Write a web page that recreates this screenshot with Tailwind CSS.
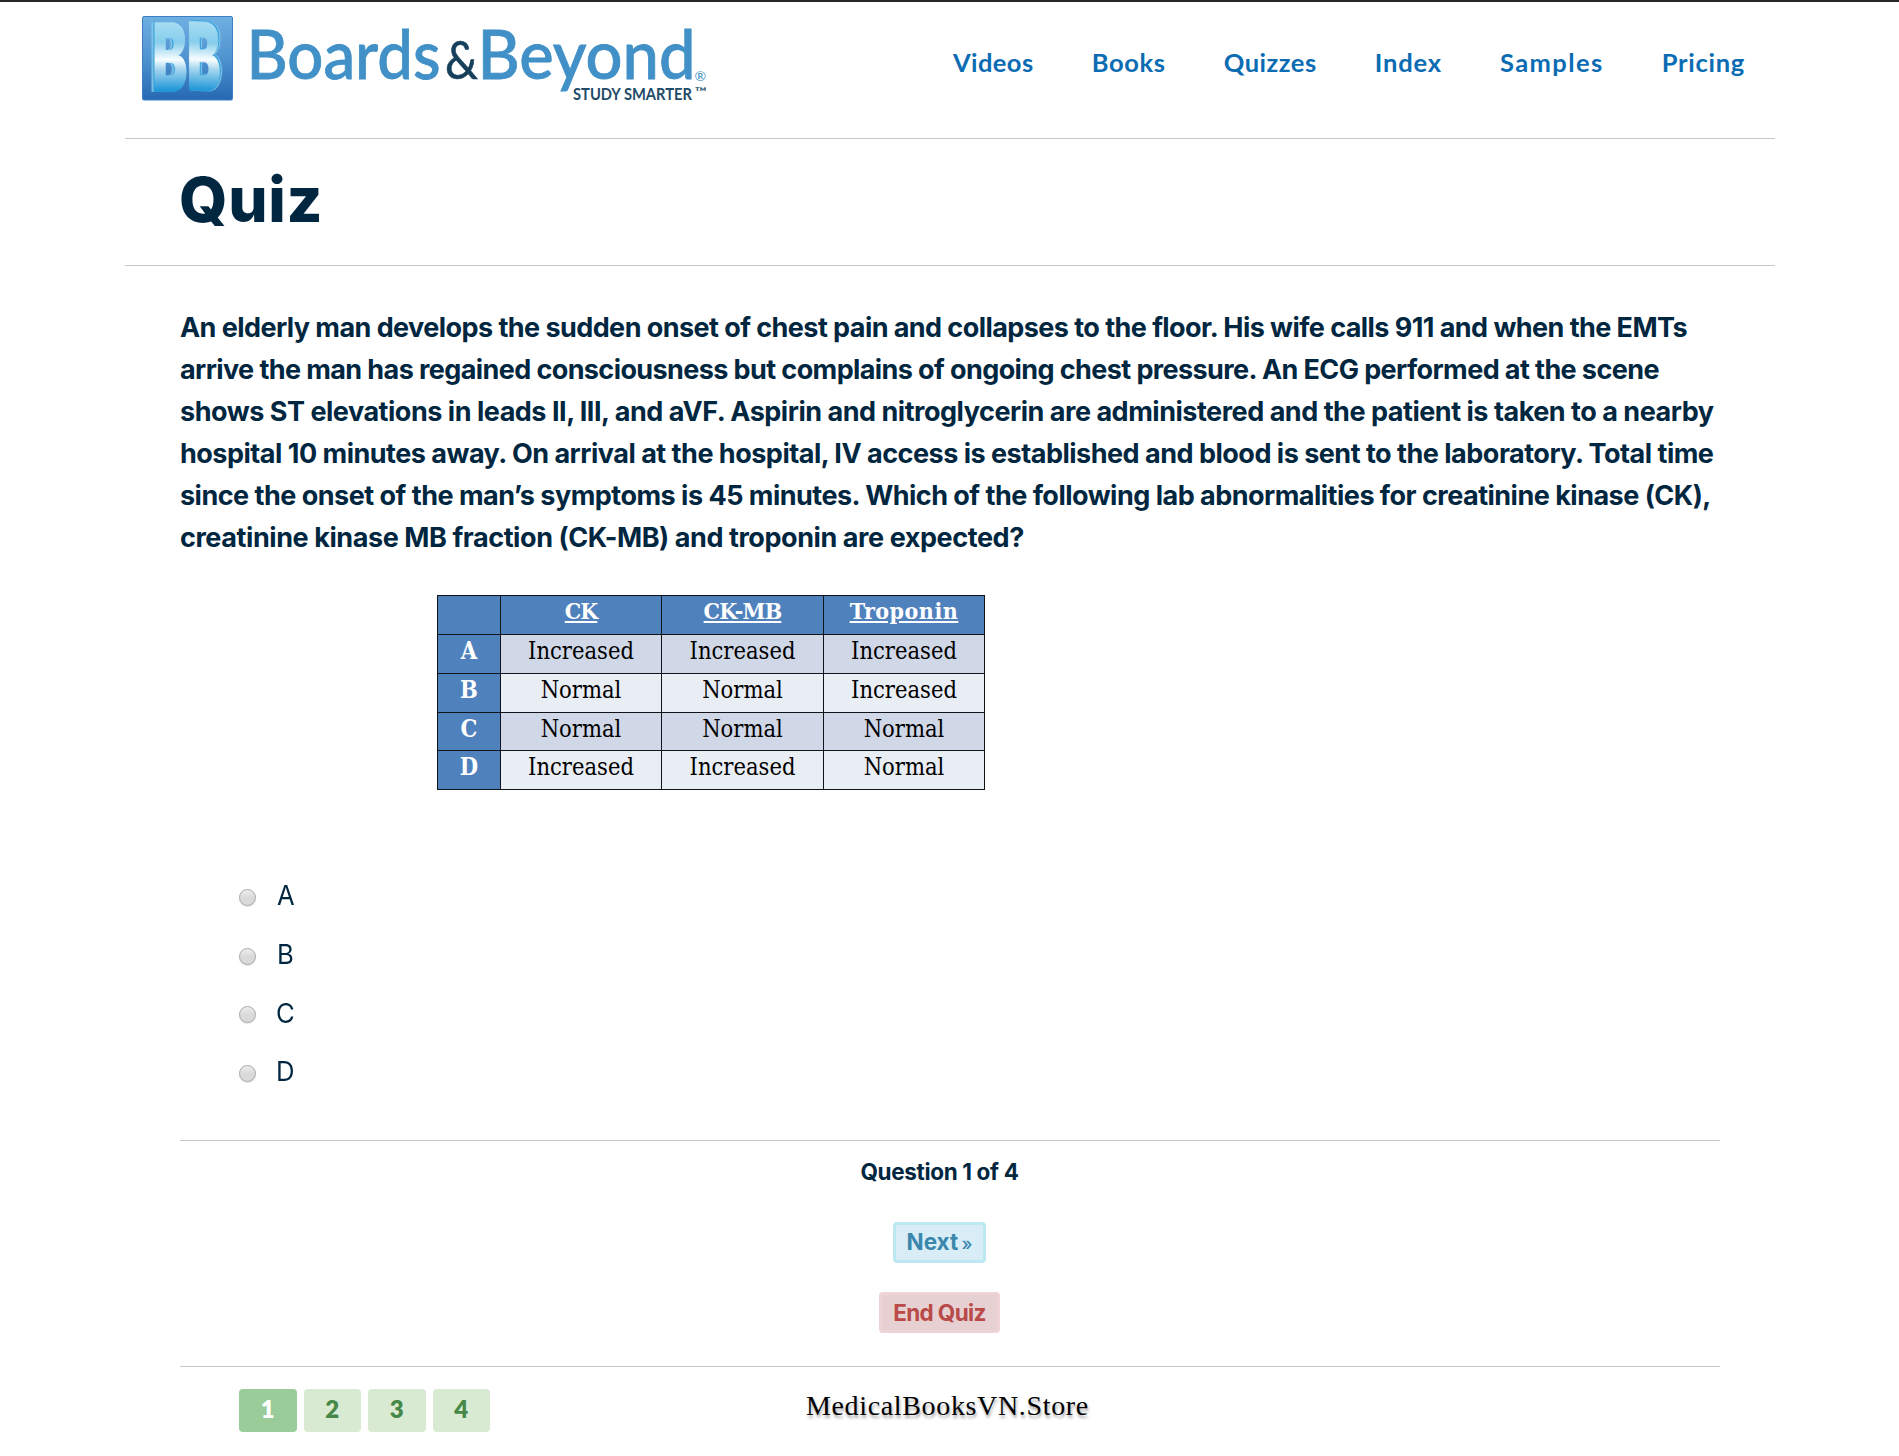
<!DOCTYPE html>
<html lang="en">
<head>
<meta charset="utf-8">
<title>Quiz - Boards &amp; Beyond</title>
<script src="https://cdn.jsdelivr.net/npm/@tailwindcss/browser@4"></script>
</head>
<body class="h-[1456px] overflow-hidden bg-white font-[Inter,sans-serif] text-[#002640]">
<div class="h-[2px] bg-[#2b282b]"></div>
<div class="ml-[125px] w-[1650px]">

  <header class="flex h-[137px] justify-between border-b border-[#c8c8c8]">
    <svg class="ml-[15px] mt-[11px] shrink-0 overflow-visible" width="575" height="96" viewBox="140 13 575 96" role="img" aria-label="Boards and Beyond">
      <defs>
        <linearGradient id="tile" x1="0" y1="0" x2="0" y2="1"><stop offset="0" stop-color="#6fb0e2"/><stop offset=".5" stop-color="#4f93d0"/><stop offset="1" stop-color="#2668b2"/></linearGradient>
        <linearGradient id="face" gradientUnits="userSpaceOnUse" x1="0" y1="-67" x2="0" y2="0"><stop offset="0" stop-color="#a5dcf2"/><stop offset=".28" stop-color="#86cdec"/><stop offset=".54" stop-color="#f8fdff"/><stop offset=".68" stop-color="#a6d6ef"/><stop offset="1" stop-color="#1e96d8"/></linearGradient>
      </defs>
      <rect x="142.500" y="16.500" width="90" height="83.500" rx="1.500" fill="url(#tile)" stroke="#3c7fc4"/>
      <g font-family="Inter, sans-serif" font-weight="900" font-size="93" fill="url(#face)" stroke="url(#face)" stroke-width="1.500" stroke-linejoin="round">
        <text transform="translate(152.500 90.500) scale(.56 1)" class="[filter:drop-shadow(-1.5px_0_0_#2f9bd9)_drop-shadow(-3px_0_0_#8ccbea)]">B</text>
        <text transform="translate(187 89.500) skewY(3) scale(.54 1)" class="[filter:drop-shadow(2px_-1px_0_#2f9bd9)_drop-shadow(2px_0_0_#8ccbea)]">B</text>
      </g>
      <g font-family="Lato, sans-serif" font-weight="500" font-size="68.500" fill="#4190c7" stroke="#4190c7" stroke-width=".8">
        <text x="246.500" y="79" textLength="194" lengthAdjust="spacingAndGlyphs">Boards</text>
        <text x="477.500" y="79" textLength="218" lengthAdjust="spacingAndGlyphs">Beyond</text>
      </g>
      <text x="445" y="79" font-family="Lato, sans-serif" font-size="52" fill="#163f5c" stroke="#163f5c" stroke-width=".6" textLength="33" lengthAdjust="spacingAndGlyphs">&amp;</text>
      <text x="694.500" y="80.500" font-family="Lato, sans-serif" font-size="14" fill="#4190c7">®</text>
      <text x="573" y="100" font-family="Lato, sans-serif" font-weight="700" font-size="17" fill="#224b68" textLength="119" lengthAdjust="spacingAndGlyphs">STUDY SMARTER</text>
      <text x="695" y="96" font-family="Lato, sans-serif" font-weight="600" font-size="12" fill="#224b68" textLength="12" lengthAdjust="spacingAndGlyphs">™</text>
    </svg>
    <nav class="mr-[30px] mt-[45px] flex h-[30px] w-[792px] justify-between font-[Lato,sans-serif] text-[25.5px] leading-[30px] font-bold text-[#0b6cb3]">
      <a class="tracking-[0.4px]">Videos</a>
      <a class="tracking-[0.6px]">Books</a>
      <a class="tracking-[0.5px]">Quizzes</a>
      <a class="tracking-[0.8px]">Index</a>
      <a class="tracking-[1.4px]">Samples</a>
      <a class="tracking-[0.7px]">Pricing</a>
    </nav>
  </header>

  <div class="h-[127px] border-b border-[#c8c8c8] pl-[54px] pt-[31px]">
    <h1 class="text-[62px] leading-[60px] font-extrabold tracking-[0.7px]">Quiz</h1>
  </div>

  <main class="mx-[55px] pt-[41px]">
    <p class="text-[27px] leading-[42px] font-bold whitespace-nowrap">
      <span class="block tracking-[-0.561px]">An elderly man develops the sudden onset of chest pain and collapses to the floor. His wife calls 911 and when the EMTs</span>
      <span class="block tracking-[-0.597px]">arrive the man has regained consciousness but complains of ongoing chest pressure. An ECG performed at the scene</span>
      <span class="block tracking-[-0.477px]">shows ST elevations in leads II, III, and aVF. Aspirin and nitroglycerin are administered and the patient is taken to a nearby</span>
      <span class="block tracking-[-0.497px]">hospital 10 minutes away. On arrival at the hospital, IV access is established and blood is sent to the laboratory. Total time</span>
      <span class="block tracking-[-0.511px]">since the onset of the man’s symptoms is 45 minutes. Which of the following lab abnormalities for creatinine kinase (CK),</span>
      <span class="block tracking-[-0.425px]">creatinine kinase MB fraction (CK-MB) and troponin are expected?</span>
    </p>

    <div class="ml-[257px] mt-[36px] grid w-[548px] grid-cols-[62px_160px_161px_160px] grid-rows-[38px_38px_38px_37px_38px] gap-px bg-[#10151c] p-px text-center font-['DejaVu_Serif_Condensed','DejaVu_Serif',serif] text-[23.5px] leading-[32px] text-black">
      <div class="bg-[#4f81bd]"></div>
      <div class="bg-[#4f81bd] text-[23px] leading-[30px] font-bold tracking-[-1px] text-white underline decoration-2 underline-offset-2">CK</div>
      <div class="bg-[#4f81bd] text-[23px] leading-[30px] font-bold tracking-[-0.8px] text-white underline decoration-2 underline-offset-2">CK-MB</div>
      <div class="bg-[#4f81bd] text-[23px] leading-[30px] font-bold tracking-[0.5px] text-white underline decoration-2 underline-offset-2">Troponin</div>
      <div class="bg-[#4f81bd] font-bold text-white">A</div>
      <div class="bg-[#d0d8e8]">Increased</div><div class="bg-[#d0d8e8]">Increased</div><div class="bg-[#d0d8e8]">Increased</div>
      <div class="bg-[#4f81bd] font-bold text-white">B</div>
      <div class="bg-[#e9edf4]">Normal</div><div class="bg-[#e9edf4]">Normal</div><div class="bg-[#e9edf4]">Increased</div>
      <div class="bg-[#4f81bd] font-bold text-white">C</div>
      <div class="bg-[#d0d8e8]">Normal</div><div class="bg-[#d0d8e8]">Normal</div><div class="bg-[#d0d8e8]">Normal</div>
      <div class="bg-[#4f81bd] font-bold text-white">D</div>
      <div class="bg-[#e9edf4]">Increased</div><div class="bg-[#e9edf4]">Increased</div><div class="bg-[#e9edf4]">Normal</div>
    </div>

    <ul class="ml-[59px] mt-[78px] h-[272px] text-[27px] leading-[55px]">
      <li class="flex h-[58.700px] items-center gap-[21px]"><span class="size-[17px] rounded-full border border-[#a8a8a8] bg-linear-to-b from-[#eeeeee] to-[#dadada] to-50% shadow-[0_1px_1px_rgba(0,0,0,0.12)]"></span><span class="inline-block h-[58px] origin-left scale-x-95">A</span></li>
      <li class="flex h-[58.700px] items-center gap-[21px]"><span class="size-[17px] rounded-full border border-[#a8a8a8] bg-linear-to-b from-[#eeeeee] to-[#dadada] to-50% shadow-[0_1px_1px_rgba(0,0,0,0.12)]"></span><span class="inline-block h-[58px] origin-left scale-x-95">B</span></li>
      <li class="flex h-[58.700px] items-center gap-[20px]"><span class="size-[17px] rounded-full border border-[#a8a8a8] bg-linear-to-b from-[#eeeeee] to-[#dadada] to-50% shadow-[0_1px_1px_rgba(0,0,0,0.12)]"></span><span class="inline-block h-[58px] origin-left scale-x-95">C</span></li>
      <li class="flex h-[58.700px] items-center gap-[20px]"><span class="size-[17px] rounded-full border border-[#a8a8a8] bg-linear-to-b from-[#eeeeee] to-[#dadada] to-50% shadow-[0_1px_1px_rgba(0,0,0,0.12)]"></span><span class="inline-block h-[58px] origin-left scale-x-95">D</span></li>
    </ul>

    <section class="flex h-[227px] flex-col items-center border-y border-[#c8c8c8] pt-[15px] pr-[21px] text-[22.5px] leading-[32px] font-bold">
      <div class="tracking-[-0.35px]">Question 1 of 4</div>
      <button class="mt-[34px] h-[41px] w-[93px] rounded-[4px] border-3 border-[#bce8f1] bg-[#d9edf7] leading-[34px] whitespace-nowrap text-[#3a87ad]">Next <span class="-ml-[2px] text-[18px] font-medium">»</span></button>
      <button class="mt-[29px] h-[41px] w-[121px] rounded-[4px] border-3 border-[#eed3d7] bg-[#e6d0d1] leading-[33px] tracking-[-0.62px] text-[#b94a48]">End Quiz</button>
    </section>

    <footer class="flex pt-[22px] pl-[59px]">
      <div class="flex gap-[7px] text-center font-[Lato,sans-serif] text-[24px] leading-[40px] font-extrabold text-[#468847]">
        <span class="h-[43px] w-[57.500px] rounded-[4px] bg-[#99cc99] text-white">1</span>
        <span class="h-[43px] w-[57.500px] rounded-[4px] bg-[#d9ead3]">2</span>
        <span class="h-[43px] w-[57.500px] rounded-[4px] bg-[#d9ead3]">3</span>
        <span class="h-[43px] w-[57.500px] rounded-[4px] bg-[#d9ead3]">4</span>
      </div>
      <div class="mt-px ml-[316px] font-['Liberation_Serif',serif] text-[28px] leading-[32px] tracking-[0.65px] text-black text-shadow-[1px_3px_3px_rgba(0,0,0,0.35)]">MedicalBooksVN.Store</div>
    </footer>
  </main>
</div>
</body>
</html>
